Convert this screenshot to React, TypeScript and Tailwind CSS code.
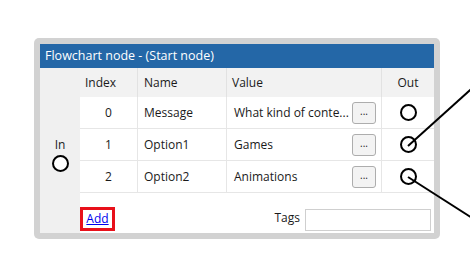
import React from 'react';

type Row = { index: number; name: string; value: string };

const rows: Row[] = [
    { index: 0, name: 'Message', value: 'What kind of conte...' },
    { index: 1, name: 'Option1', value: 'Games' },
    { index: 2, name: 'Option2', value: 'Animations' },
];

function Port() {
    return <div className="h-[17px] w-[17px] rounded-full border-2 border-black bg-white" />;
}

export default function App() {
    return (
        <div
            className="relative h-[272px] w-[470px] overflow-hidden bg-white pl-[34px] pt-[38px] text-[12px] text-[#1a1a1a]"
            style={{ fontFamily: '"Open Sans", "Noto Sans", sans-serif' }}
        >
            <div className="w-[406px] rounded-[5px] bg-[#d2d2d2] p-[6px]">
                <div className="bg-white">
                    <div className="flex h-[24px] items-center bg-[#2467a7] pl-[5px] text-[12.5px] text-white">
                        Flowchart node - (Start node)
                    </div>
                    <div className="flex">
                        {/* In port column */}
                        <div className="flex w-[40px] flex-col items-center gap-[2px] bg-[#f0f0f0] pt-[69px]">
                            <span className="leading-[16px]">In</span>
                            <Port />
                        </div>

                        <div className="flex-1">
                            <div className="grid grid-cols-[58px_89px_155px_52px] bg-[#f2f2f2]">
                                <div className="flex h-[29px] items-center border-r border-[#e2e2e2] pl-[5px]">Index</div>
                                <div className="flex items-center border-r border-[#e2e2e2] pl-[6px]">Name</div>
                                <div className="flex items-center border-r border-[#e2e2e2] pl-[5px]">Value</div>
                                <div className="flex items-center justify-center">Out</div>
                            </div>
                            {rows.map((r) => (
                                <div key={r.index} className="grid h-[32px] grid-cols-[58px_89px_155px_52px] border-b border-[#e6e6e6]">
                                    <div className="flex items-center justify-center border-r border-[#e6e6e6]">{r.index}</div>
                                    <div className="flex items-center border-r border-[#e6e6e6] pl-[6px]">{r.name}</div>
                                    <div className="flex items-center justify-between border-r border-[#e6e6e6] pl-[7px] pr-[5px]">
                                        <span>{r.value}</span>
                                        <button className="flex h-[22px] w-[24px] items-center justify-center rounded-[3px] border border-[#adadad] bg-[#f3f3f3] pb-[3px] text-[10px] leading-none">
                                            ...
                                        </button>
                                    </div>
                                    <div className="flex items-center justify-center">
                                        <Port />
                                    </div>
                                </div>
                            ))}
                            <div className="flex h-[40px] items-end pb-[2px] pr-[3px]">
                                <a
                                    href="#"
                                    className="flex h-[24px] w-[35px] items-center justify-center border-[3px] border-[#e8101a] text-[#0000ee] underline"
                                >
                                    Add
                                </a>
                                <span className="ml-auto mr-[5px] pb-[4px]">Tags</span>
                                <div className="h-[22px] w-[126px] border border-[#cfcfcf] bg-white" />
                            </div>
                        </div>
                    </div>
                </div>
            </div>

            {/* connections leaving the out ports */}
            <svg className="pointer-events-none absolute left-0 top-0" width="470" height="272">
                <line x1="408" y1="146" x2="480" y2="81" stroke="black" strokeWidth="2" />
                <line x1="408" y1="177" x2="480" y2="223" stroke="black" strokeWidth="2" />
            </svg>
        </div>
    );
}
